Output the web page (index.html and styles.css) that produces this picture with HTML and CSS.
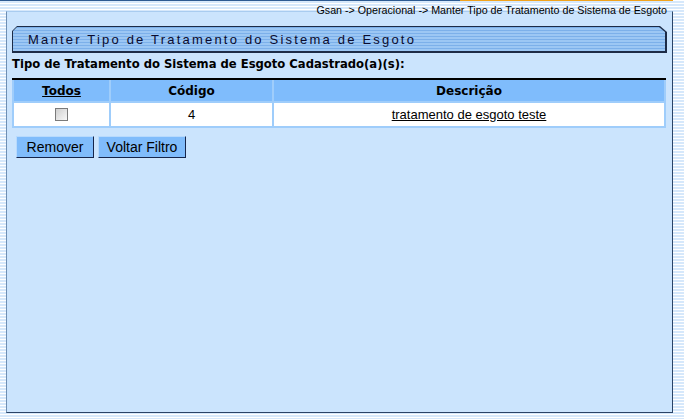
FILE: index.html
```html
<!DOCTYPE html>
<html lang="pt-BR">
<head>
  <meta charset="UTF-8" />
  <title>Manter Tipo de Tratamento do Sistema de Esgoto</title>
  <link rel="stylesheet" href="styles.css">
</head>
<body>

  <div class="topbar">
    <span class="crumb">Gsan -&gt; Operacional -&gt; Manter Tipo de Tratamento de Sistema de Esgoto</span>
  </div>

  <div class="panel">
    <div class="titlebar">
      <div class="titlebar-inner">Manter Tipo de Tratamento do Sistema de Esgoto</div>
    </div>

    <p class="heading">Tipo de Tratamento do Sistema de Esgoto Cadastrado(a)(s):</p>

    <table class="grid">
      <colgroup>
        <col style="width:95px">
        <col style="width:161px">
        <col style="width:390px">
      </colgroup>
      <thead>
        <tr>
          <th><a href="#">Todos</a></th>
          <th>Código</th>
          <th>Descrição</th>
        </tr>
      </thead>
      <tbody>
        <tr>
          <td><input type="checkbox" class="check"></td>
          <td>4</td>
          <td><a href="#">tratamento de esgoto teste</a></td>
        </tr>
      </tbody>
    </table>

    <div class="actions">
      <button class="btn btn-remove">Remover</button>
      <button class="btn btn-back">Voltar Filtro</button>
    </div>
  </div>

</body>
</html>
```

FILE: styles.css
```css
body {
  margin: 0;
  font-family: "Liberation Sans", Arial, sans-serif;
  background: repeating-linear-gradient(to bottom, #ffffff 0, #ffffff 1px, #d6e8fb 1px, #d6e8fb 3px);
  height: 419px;
  overflow: hidden;
}

.topbar {
  height: 11px;
  text-align: right;
  padding-right: 17px;
  background:
    linear-gradient(to right, #2d5a92 0, #2d5a92 460px, #f2a31c 460px, #f2a31c 673px, transparent 673px) top left / 100% 1px no-repeat;
}

.crumb {
  font-size: 10.7px;
  line-height: 11px;
  color: #000;
  white-space: nowrap;
}

.panel {
  margin-left: 6px;
  width: 655px;
  height: 386px;
  padding: 14px 5px 0 5px;
  background: #cbe4fd;
  border-top: 1px solid #a9ccf0;
  border-left: 1px solid #6f8fb3;
  border-right: 1px solid #2b4467;
  border-bottom: 1px solid #2b4467;
}

.titlebar {
  background: #1d2c47;
  padding: 1px 2px 2px 1px;
  clip-path: polygon(5px 0, calc(100% - 7px) 0, 100% 6px, 100% 100%, 0 100%, 0 5px);
}

.titlebar-inner {
  height: 22px;
  padding: 2px 0 0 15px;
  font-size: 13px;
  line-height: 22px;
  letter-spacing: 2.2px;
  color: #0b0b2e;
  background: repeating-linear-gradient(to bottom, #7cb0ea 0, #7cb0ea 1px, #9cc7f4 1px, #9cc7f4 3px);
  clip-path: polygon(4px 0, calc(100% - 6px) 0, 100% 5px, 100% 100%, 0 100%, 0 4px);
}

.heading {
  margin: 5px 0 7px;
  font: bold 11.6px/13px "DejaVu Sans", Verdana, sans-serif;
  color: #000;
}

.grid {
  width: 654px;
  table-layout: fixed;
  border-collapse: separate;
  border-spacing: 2px;
  background: linear-gradient(to bottom, #000 0, #000 2px, #9fcdfb 2px);
}

.grid th {
  height: 21px;
  padding: 0;
  background: #7fbcfc;
  font: bold 12px "DejaVu Sans", Verdana, sans-serif;
  color: #000;
  text-align: center;
}

.grid th a {
  color: #000;
}

.grid td {
  height: 23px;
  padding: 0;
  background: #fff;
  font-size: 13px;
  color: #000;
  text-align: center;
}

.grid td a {
  color: #000;
}

.check {
  appearance: none;
  width: 13px;
  height: 13px;
  margin: 3px 0 0;
  border: 1px solid #7a7a7a;
  background: linear-gradient(135deg, #cfcfcf, #f8f8f8);
}

.actions {
  display: flex;
  gap: 4px;
  margin: 8px 0 0 4px;
}

.btn {
  height: 22px;
  padding: 0;
  font: 14px "Liberation Sans", Arial, sans-serif;
  color: #000;
  background: #80bcfb;
  border-top: 1px solid #b8dafd;
  border-left: 1px solid #b8dafd;
  border-right: 1px solid #16254a;
  border-bottom: 1px solid #16254a;
}

.btn-remove {
  width: 78px;
}

.btn-back {
  width: 88px;
}
```
